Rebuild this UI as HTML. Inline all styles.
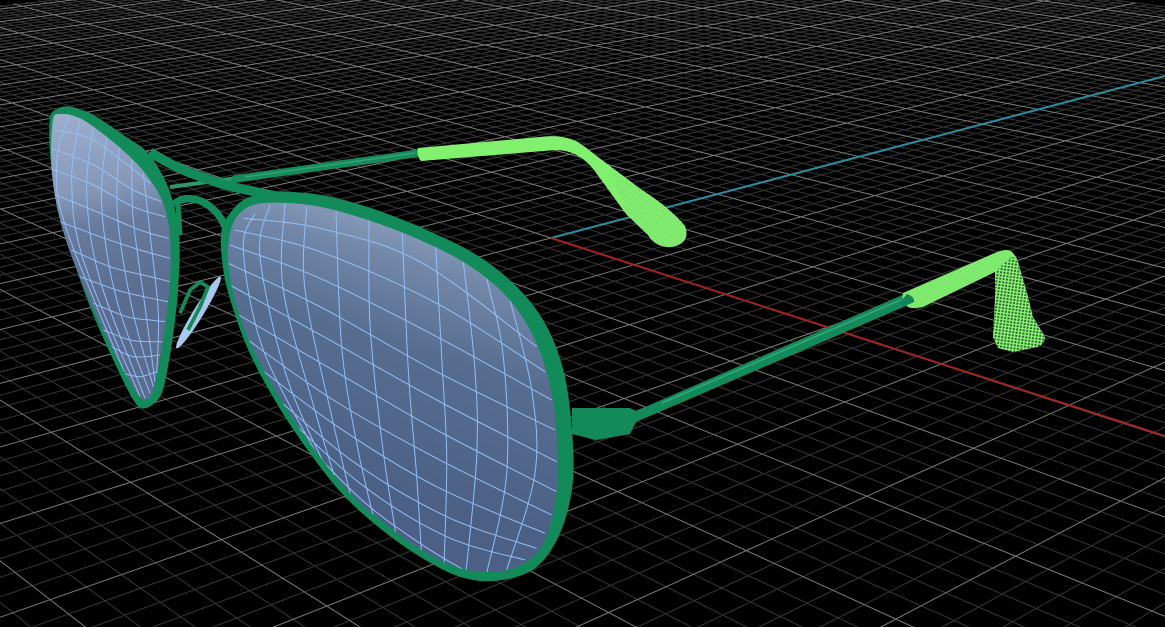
<!DOCTYPE html>
<html>
<head>
<meta charset="utf-8">
<title>Aviator sunglasses wireframe</title>
<style>
html,body{margin:0;padding:0;background:#000;width:1165px;height:627px;overflow:hidden}
svg{display:block;position:absolute;left:0;top:0;overflow:hidden}
</style>
</head>
<body>
<svg id="s" xmlns="http://www.w3.org/2000/svg" width="1165" height="627" viewBox="0 0 1165 627">
<defs>
<linearGradient id="gr" gradientUnits="userSpaceOnUse" x1="430" y1="205" x2="350" y2="480">
<stop offset="0" stop-color="#96a8c7"/><stop offset=".22" stop-color="#7287a8"/><stop offset=".5" stop-color="#566d90"/><stop offset="1" stop-color="#4c6086"/>
</linearGradient>
<linearGradient id="gl" gradientUnits="userSpaceOnUse" x1="80" y1="110" x2="115" y2="300">
<stop offset="0" stop-color="#9eaecd"/><stop offset=".42" stop-color="#8598b8"/><stop offset=".6" stop-color="#687b9d"/><stop offset="1" stop-color="#5a6c8f"/>
</linearGradient>
<pattern id="mesh" width="3.4" height="3.2" patternUnits="userSpaceOnUse" patternTransform="rotate(8)">
<rect width="3.4" height="3.2" fill="#2a5f26"/>
<rect width="3.4" height="1.4" fill="#86ee74"/>
<rect width="1.5" height="3.2" fill="#86ee74"/>
</pattern>
<pattern id="mesh2" width="2.6" height="2.6" patternUnits="userSpaceOnUse" patternTransform="rotate(-25)">
<rect width="2.6" height="2.6" fill="#66cc59"/>
<rect width="2.6" height="1.5" fill="#84f072"/>
<rect width="1.5" height="2.6" fill="#84f072"/>
</pattern>
<clipPath id="cr"><path id="crp"/></clipPath>
<clipPath id="cl"><path id="clp"/></clipPath>
</defs>
<rect width="1165" height="627" fill="#000"/>
<path id="minor" fill="none" stroke="#363636" stroke-width="1"/>
<path id="major" fill="none" stroke="#7a7a7a" stroke-width="1"/>
<line x1="551" y1="238" x2="1165" y2="76" stroke="#2b8c a0" stroke-width="0"/>
<line x1="551" y1="238" x2="1165" y2="76" stroke="#2b8ca0" stroke-width="2"/>
<line x1="551" y1="238" x2="1165" y2="436" stroke="#a3241d" stroke-width="2"/>

<!-- far temple -->
<path d="M170,187 L245,177" stroke="#2a9a6c" stroke-width="4" fill="none"/>
<path d="M235,179 L420,153" stroke="#158a5a" stroke-width="7.5" fill="none" stroke-linecap="round"/>
<path d="M245,177 L415,153" stroke="#35a57c" stroke-width="1.4" fill="none"/>
<path d="M418,148 L540,137 Q560,134 576,141 Q586,147 594,154 L642,190 Q670,208 685,226 Q691,243 672,247 Q656,248 648,235 L626,214 L594,170 Q578,150 556,150 L421,161 Q416,155 418,148 Z" fill="#80f06e"/>
<path d="M612,172 L642,190 Q670,208 685,226 Q691,243 672,247 Q656,248 648,235 L626,214 Z" fill="url(#mesh2)"/>

<!-- near temple -->
<path d="M572,408 L630,408 L636,411 L907,293 L913,303 L636,422 L630,434 L596,440 L572,434 Z" fill="#138a5a"/>
<path d="M662,403 L905,298" stroke="#35a57c" stroke-width="1.6" fill="none"/>
<path d="M903,293 L997,252 Q1008,248 1012,252 Q1017,257 1018,262 L1027,293 L1033,317 L1045,337 Q1044,345 1037,347 L1013,352 L998,348 L993,337 L995,300 L995,272 L923,307 Q912,309 908,307 L902,302 Z" fill="url(#mesh2)"/>
<path d="M995,272 L1012,256 L1018,262 L1027,293 L1033,317 L1045,337 Q1044,345 1037,347 L1013,352 L998,348 L993,337 L995,300 Z" fill="url(#mesh)"/>
<path d="M899,303 L907,294 Q915,297 914,302 L905,306 Z" fill="#0f8558"/>

<!-- nose pad -->
<ellipse cx="198.500" cy="312.500" rx="42" ry="5.200" transform="rotate(-58.500 198.500 312.500)" fill="#a9c8ef"/>
<path d="M180,313 L184,304 L190,290 L200,282 L208,287 L200,307 L188,330" stroke="#148a5a" stroke-width="3.800" fill="none"/>

<!-- bridge -->
<path d="M150,152 C175,168 195,176 233,187 L285,198" stroke="#138a5a" stroke-width="9.500" fill="none"/>
<path d="M174,205 C180,197 195,196 208,205 C219,213 224,222 227,232" stroke="#138a5a" stroke-width="7.500" fill="none"/>
<path d="M178,205 L180,235" stroke="#138a5a" stroke-width="5" fill="none"/>

<!-- lenses -->
<path id="ol" fill="#138a5a"/>
<path id="il" fill="url(#gl)"/>
<path id="lwl" fill="none" stroke="#93bff5" stroke-width="1" clip-path="url(#cl)"/>
<path id="or" fill="#138a5a"/>
<path id="ir" fill="url(#gr)"/>
<path id="lwr" fill="none" stroke="#93bff5" stroke-width="1" clip-path="url(#cr)"/>
</svg>
<script>
(function(){
var O=[551,238],Vb=[2700,-329],Vr=[-1110,-300];
function P2(A,W){var d=1+A-W;return [(O[0]+A*Vb[0]-W*Vr[0])/d,(O[1]+A*Vb[1]-W*Vr[1])/d];}
function seg(p,q){
 var t0=0,t1=1,dx=q[0]-p[0],dy=q[1]-p[1],b=[[-dx,p[0]+1],[dx,1166-p[0]],[-dy,p[1]+1],[dy,628-p[1]]];
 for(var k=0;k<4;k++){var m=b[k][0],n=b[k][1];
  if(m==0){if(n<0)return "";}
  else{var r=n/m;if(m<0){if(r>t1)return "";if(r>t0)t0=r;}else{if(r<t0)return "";if(r<t1)t1=r;}}}
 return "M"+(p[0]+t0*dx).toFixed(1)+","+(p[1]+t0*dy).toFixed(1)+"L"+(p[0]+t1*dx).toFixed(1)+","+(p[1]+t1*dy).toFixed(1);
}
var a=.0419,c=.0475,mi="",ma="",i,A,W,s;
var Wmin=-14.3*c,Amax=13.8*a;
for(i=-195;i<=69;i++){A=i/5*a;var wm=Math.min(A+.96,2.2);if(wm<=Wmin)continue;
 s=seg(P2(A,Wmin),P2(A,wm));if(i%5==0)ma+=s;else mi+=s;}
for(i=-71;i<=230;i++){W=i/5*c;var am=Math.max(W-.96,-2);if(am>=Amax)continue;
 s=seg(P2(am,W),P2(Amax,W));if(i%5==0)ma+=s;else mi+=s;}
document.getElementById("minor").setAttribute("d",mi);
document.getElementById("major").setAttribute("d",ma);

function cr(p,closed){var n=p.length,d="M"+p[0][0].toFixed(1)+","+p[0][1].toFixed(1),m=closed?n:n-1;
 for(var k=0;k<m;k++){
  var p0=closed?p[(k-1+n)%n]:p[Math.max(k-1,0)],p1=p[k],p2=p[(k+1)%n],p3=closed?p[(k+2)%n]:p[Math.min(k+2,n-1)];
  d+="C"+(p1[0]+(p2[0]-p0[0])/6).toFixed(1)+","+(p1[1]+(p2[1]-p0[1])/6).toFixed(1)+" "+(p2[0]-(p3[0]-p1[0])/6).toFixed(1)+","+(p2[1]-(p3[1]-p1[1])/6).toFixed(1)+" "+p2[0].toFixed(1)+","+p2[1].toFixed(1);}
 return d+(closed?"Z":"");}
function R(l){return l.map(function(q){return [220+q[0]/3,190+q[1]/3];});}
function L(l){return l.map(function(q){return [q[0]/3,80+q[1]/3];});}
function set(id,d){document.getElementById(id).setAttribute("d",d);}

var orr=[[5,120],[30,70],[70,30],[130,10],[200,5],[320,18],[470,60],[620,120],[770,195],[890,290],[975,400],[1030,540],[1055,710],[1058,880],[1020,1030],[945,1135],[830,1172],[720,1160],[600,1100],[480,1015],[370,915],[270,790],[170,640],[85,480],[25,310],[5,200]];
var irr=[[30,130],[55,75],[100,45],[180,38],[300,50],[450,92],[600,150],[740,222],[860,320],[945,450],[995,610],[1012,770],[1008,920],[975,1050],[915,1118],[830,1145],[720,1135],[610,1083],[500,1005],[400,920],[300,800],[195,650],[105,490],[50,350],[25,220]];
set("or",cr(R(orr),true));set("ir",cr(R(irr),true));set("crp",cr(R(irr),true));
var lr=[
[[70,85],[300,115],[600,215],[950,470]],
[[45,120],[300,185],[650,340],[975,545]],
[[30,165],[300,265],[650,440],[995,630]],
[[25,220],[300,350],[650,545],[1005,720]],
[[30,285],[320,445],[650,630],[1010,815]],
[[40,365],[330,535],[650,720],[1010,905]],
[[70,440],[340,630],[650,805],[995,975]],
[[100,520],[360,715],[650,890],[975,1030]],
[[130,590],[400,815],[680,980],[950,1075]],
[[160,640],[420,880],[680,1040],[915,1110]],
[[200,700],[420,925],[600,1060],[740,1145]],
[[105,70],[70,180],[130,480],[300,810]],
[[150,45],[120,200],[200,560],[330,860]],
[[195,40],[190,300],[290,680],[350,880]],
[[260,50],[255,300],[340,700],[400,950]],
[[348,65],[365,470],[410,760],[465,1000]],
[[447,90],[450,400],[485,750],[530,1050]],
[[547,130],[565,540],[590,860],[605,1100]],
[[647,170],[665,500],[680,800],[672,1130]],
[[730,215],[765,540],[770,800],[738,1145]],
[[800,265],[850,500],[860,850],[800,1150]],
[[870,330],[935,600],[945,850],[860,1140]]
];
set("lwr",lr.map(function(l){return cr(R(l),false);}).join(""));

var oll=[[150,115],[170,88],[210,80],[280,105],[370,165],[440,215],[490,290],[520,370],[538,470],[535,620],[520,760],[500,880],[480,950],[435,985],[400,960],[340,840],[270,680],[210,510],[170,370],[150,220]];
var ill=[[158,125],[180,102],[240,115],[320,170],[400,240],[450,300],[490,370],[510,470],[510,600],[495,740],[472,880],[450,950],[420,950],[370,870],[300,730],[230,570],[180,420],[155,270]];
set("ol",cr(L(oll),true));set("il",cr(L(ill),true));set("clp",cr(L(ill),true));
var ll=[
[[165,150],[270,175],[370,245],[450,310]],
[[155,205],[280,255],[400,330],[485,365]],
[[150,265],[280,315],[400,380],[495,410]],
[[155,340],[290,395],[420,450],[505,475]],
[[180,425],[300,470],[420,510],[510,535]],
[[215,510],[330,560],[430,585],[510,605]],
[[240,590],[350,630],[430,650],[505,665]],
[[280,670],[380,710],[450,720],[495,725]],
[[310,750],[390,780],[450,785],[490,785]],
[[335,800],[400,830],[480,825]],
[[370,880],[420,890],[470,875]],
[[205,105],[170,250],[200,450],[400,940]],
[[240,120],[215,300],[250,540],[420,950]],
[[280,140],[260,340],[300,600],[435,955]],
[[320,165],[305,380],[350,660],[450,940]],
[[358,195],[352,400],[395,680],[460,920]],
[[395,240],[400,420],[435,680],[465,905]],
[[430,280],[450,460],[475,700],[470,880]]
];
set("lwl",ll.map(function(l){return cr(L(l),false);}).join(""));
})();
</script>
</body>
</html>
